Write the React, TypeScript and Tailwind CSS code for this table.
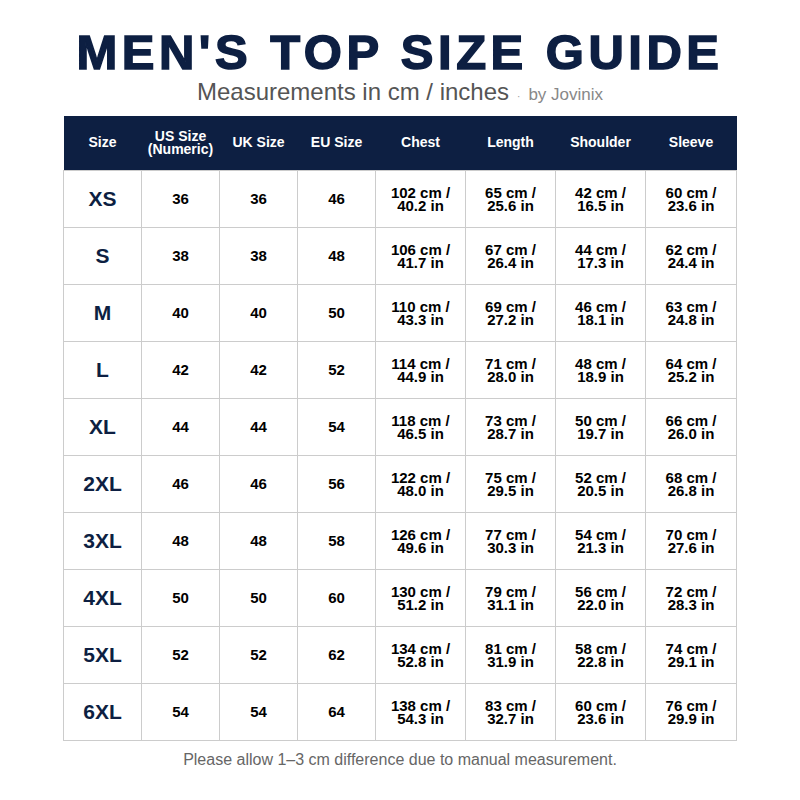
const headers = ['Size', 'US Size\n(Numeric)', 'UK Size', 'EU Size', 'Chest', 'Length', 'Shoulder', 'Sleeve'];

const rows = [
  ['XS', '36', '36', '46', '102 cm /\n40.2 in', '65 cm /\n25.6 in', '42 cm /\n16.5 in', '60 cm /\n23.6 in'],
  ['S', '38', '38', '48', '106 cm /\n41.7 in', '67 cm /\n26.4 in', '44 cm /\n17.3 in', '62 cm /\n24.4 in'],
  ['M', '40', '40', '50', '110 cm /\n43.3 in', '69 cm /\n27.2 in', '46 cm /\n18.1 in', '63 cm /\n24.8 in'],
  ['L', '42', '42', '52', '114 cm /\n44.9 in', '71 cm /\n28.0 in', '48 cm /\n18.9 in', '64 cm /\n25.2 in'],
  ['XL', '44', '44', '54', '118 cm /\n46.5 in', '73 cm /\n28.7 in', '50 cm /\n19.7 in', '66 cm /\n26.0 in'],
  ['2XL', '46', '46', '56', '122 cm /\n48.0 in', '75 cm /\n29.5 in', '52 cm /\n20.5 in', '68 cm /\n26.8 in'],
  ['3XL', '48', '48', '58', '126 cm /\n49.6 in', '77 cm /\n30.3 in', '54 cm /\n21.3 in', '70 cm /\n27.6 in'],
  ['4XL', '50', '50', '60', '130 cm /\n51.2 in', '79 cm /\n31.1 in', '56 cm /\n22.0 in', '72 cm /\n28.3 in'],
  ['5XL', '52', '52', '62', '134 cm /\n52.8 in', '81 cm /\n31.9 in', '58 cm /\n22.8 in', '74 cm /\n29.1 in'],
  ['6XL', '54', '54', '64', '138 cm /\n54.3 in', '83 cm /\n32.7 in', '60 cm /\n23.6 in', '76 cm /\n29.9 in'],
];

const widths = ['w-[78px]', 'w-[78px]', 'w-[78px]', 'w-[78px]', 'w-[90px]', 'w-[90px]', 'w-[90px]', 'w-[91px]'];

export default function App() {
  return (
    <div className="w-[800px] h-[800px] bg-white flex flex-col items-center font-['Liberation_Sans',sans-serif]">
      {/* Title */}
      <h1 className="mt-[27px] text-[49px] leading-[50px] font-bold tracking-[4.5px] text-[#0d1f42] [-webkit-text-stroke:1.5px_#0d1f42]">
        MEN'S TOP SIZE GUIDE
      </h1>
      <div className="-mt-[3px] flex items-baseline gap-2 text-[#555]">
        <span className="text-[24px]">Measurements in cm / inches</span>
        <span className="text-[10px] text-[#999]">·</span>
        <span className="text-[17px] text-[#888]">by Jovinix</span>
      </div>

      {/* Table */}
      <table className="mt-[6px] border-collapse table-fixed w-[673px]">
        <thead>
          <tr className="bg-[#0d1f42] h-[54px]">
            {headers.map((h, i) => (
              <th key={i} className={`${widths[i]} text-white text-[14px] leading-[13px] font-bold whitespace-pre-line`}>
                {h}
              </th>
            ))}
          </tr>
        </thead>
        <tbody>
          {rows.map((r, ri) => (
            <tr key={ri} className="h-[57px]">
              {r.map((c, ci) => (
                <td
                  key={ci}
                  className={`border border-[#cccccc] text-center font-bold whitespace-pre-line ${
                    ci === 0 ? 'text-[21px] text-[#0d1f42]' : 'text-[15px] leading-[13px] text-black'
                  }`}
                >
                  {c}
                </td>
              ))}
            </tr>
          ))}
        </tbody>
      </table>

      <p className="mt-[7px] text-[16px] text-[#666]">Please allow 1–3 cm difference due to manual measurement.</p>
    </div>
  );
}
